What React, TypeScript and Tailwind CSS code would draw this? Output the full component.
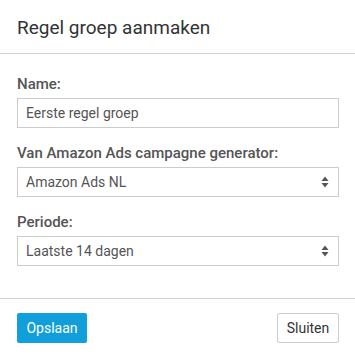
function SelectArrows() {
	return (
		<svg width="8" height="12" viewBox="0 0 8 12" className="text-[#555]">
			<path d="M4 0.5 L7.5 5 L0.5 5 Z" fill="currentColor" />
			<path d="M4 11.5 L7.5 7 L0.5 7 Z" fill="currentColor" />
		</svg>
	);
}

function FakeSelect({ value }: { value: string }) {
	return (
		<div className="flex h-[30px] items-center justify-between border border-[#ccc] bg-white pl-[8px] pr-[9px] text-[14px] text-[#555]">
			<span>{value}</span>
			<SelectArrows />
		</div>
	);
}

export default function App() {
	return (
		<div
			className="w-[355px] h-[356px] bg-white"
			style={{ fontFamily: "Roboto, 'Liberation Sans', sans-serif" }}
		>
			{/* Header */}
			<div className="pl-[17px] pr-[16px] pt-[16px] pb-[14px] border-b border-[#d2d2d2]">
				<h4 className="text-[19px] leading-[23px] text-[#333]">
					Regel groep aanmaken
				</h4>
			</div>

			{/* Body */}
			<div className="pl-[17px] pr-[16px] pt-[20px] pb-[17px] border-b border-[#d2d2d2]">
				<div className="mb-[15px]">
					<label className="block mb-[4px] text-[15px] leading-[20px] font-medium text-[#555]">
						Name:
					</label>
					<div className="flex h-[30px] items-center border border-[#ccc] bg-white pl-[8px] text-[14px] text-[#555]">
						Eerste regel groep
					</div>
				</div>
				<div className="mb-[15px]">
					<label className="block mb-[4px] text-[15px] leading-[20px] font-medium text-[#555]">
						Van Amazon Ads campagne generator:
					</label>
					<FakeSelect value="Amazon Ads NL" />
				</div>
				<div className="mb-[15px]">
					<label className="block mb-[4px] text-[15px] leading-[20px] font-medium text-[#555]">
						Periode:
					</label>
					<FakeSelect value="Laatste 14 dagen" />
				</div>
			</div>

			{/* Footer */}
			<div className="flex items-center justify-between pl-[17px] pr-[16px] pt-[14px]">
				<button
					type="button"
					className="h-[30px] w-[70px] rounded-[2px] bg-[#109fdb] text-[14px] text-white"
				>
					Opslaan
				</button>
				<button
					type="button"
					className="h-[30px] w-[62px] rounded-[2px] border border-[#ccc] bg-white text-[14px] text-[#333]"
				>
					Sluiten
				</button>
			</div>
		</div>
	);
}
